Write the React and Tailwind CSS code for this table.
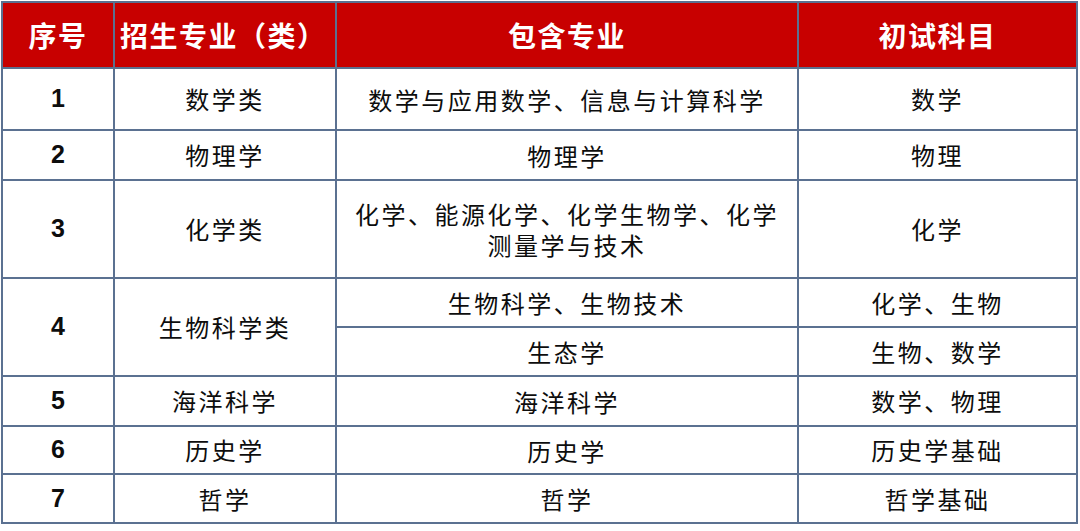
const rows = [
  { no: '1', major: '数学类', subs: [{ inc: '数学与应用数学、信息与计算科学', exam: '数学', h: 'h-[62px]' }] },
  { no: '2', major: '物理学', subs: [{ inc: '物理学', exam: '物理', h: 'h-[50px]' }] },
  {
    no: '3',
    major: '化学类',
    subs: [{ inc: ['化学、能源化学、化学生物学、化学', '测量学与技术'], exam: '化学', h: 'h-[98px]' }],
  },
  {
    no: '4',
    major: '生物科学类',
    subs: [
      { inc: '生物科学、生物技术', exam: '化学、生物', h: 'h-[49px]' },
      { inc: '生态学', exam: '生物、数学', h: 'h-[49px]' },
    ],
  },
  { no: '5', major: '海洋科学', subs: [{ inc: '海洋科学', exam: '数学、物理', h: 'h-[50px]' }] },
  { no: '6', major: '历史学', subs: [{ inc: '历史学', exam: '历史学基础', h: 'h-[48px]' }] },
  { no: '7', major: '哲学', subs: [{ inc: '哲学', exam: '哲学基础', h: 'h-[49px]' }] },
];

const cell = 'border-2 border-[#5b7191] text-center align-middle';
const body = 'text-[24px] tracking-[2.5px] text-[#0d0d0d] font-[Noto_Sans_CJK_SC,sans-serif]';

export default function App() {
  return (
    <div className="w-[1080px] h-[531px] bg-white pt-px pl-px">
      <table className="table-fixed border-collapse w-[1077px]">
        <colgroup>
          <col className="w-[112px]" />
          <col className="w-[222px]" />
          <col className="w-[462px]" />
          <col />
        </colgroup>
        <thead>
          <tr className="h-[66px] bg-[#c80000] text-white text-[28px] font-bold tracking-[1.5px] font-[Noto_Sans_CJK_SC,sans-serif]">
            <th className={cell}>序号</th>
            <th className={`${cell} text-left pl-[5px]`}>招生专业（类）</th>
            <th className={cell}>包含专业</th>
            <th className={cell}>初试科目</th>
          </tr>
        </thead>
        <tbody>
          {rows.map((r) =>
            r.subs.map((s, i) => (
              <tr key={r.no + '-' + i} className={s.h}>
                {i === 0 && (
                  <td
                    rowSpan={r.subs.length}
                    className={`${cell} text-[25px] font-bold text-[#0d0d0d] font-['Liberation_Sans',Arial,sans-serif]`}
                  >
                    {r.no}
                  </td>
                )}
                {i === 0 && (
                  <td rowSpan={r.subs.length} className={`${cell} ${body}`}>
                    {r.major}
                  </td>
                )}
                <td className={`${cell} ${body} leading-[31px]`}>
                  {Array.isArray(s.inc) ? s.inc.map((t) => <div key={t}>{t}</div>) : s.inc}
                </td>
                <td className={`${cell} ${body}`}>{s.exam}</td>
              </tr>
            ))
          )}
        </tbody>
      </table>
    </div>
  );
}
